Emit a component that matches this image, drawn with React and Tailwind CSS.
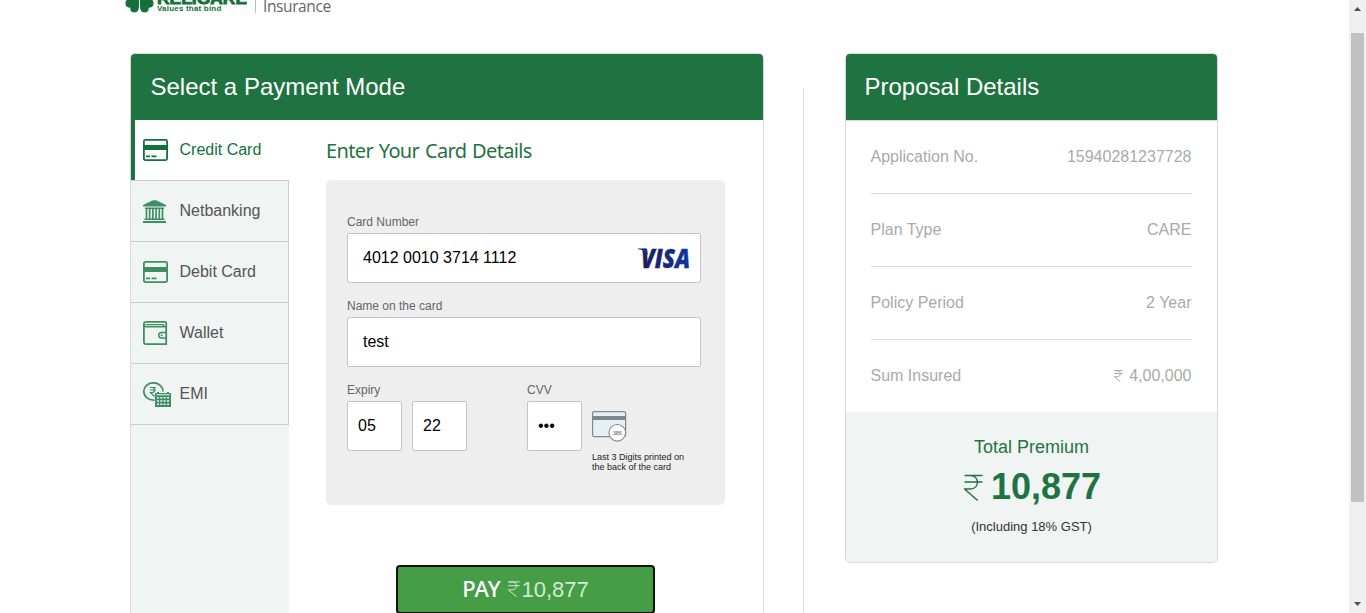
import React from "react";

function Rupee({ className, weight = 1 }) {
  return (
    <svg viewBox="0 0 18 27" className={className} fill="none" stroke="currentColor" strokeWidth={weight} preserveAspectRatio="none">
      <path vectorEffect="non-scaling-stroke" d="M0.5 1.5H17.5M0.5 8H17.5M0.5 1.5H6C15 1.5 15 15 6 15H0.5L13 26.5" />
    </svg>
  );
}

function CardIcon() {
  return (
    <svg width="25" height="22" viewBox="0 0 25 22" fill="none" stroke="currentColor">
      <rect x=".9" y=".9" width="23.2" height="20.2" rx="1.5" strokeWidth="1.8" />
      <path d="M1 8.5H24" strokeWidth="5" />
      <path d="M3 17.3H7M8.5 17.3H13.5" strokeWidth="1.8" />
    </svg>
  );
}

function BankIcon() {
  return (
    <svg width="24" height="23" viewBox="0 0 24 23" fill="currentColor">
      <path d="M0 6.5V5L10 .2H13L23 5V6.5Z" />
      <path d="M2 7.5H21V9H2ZM1.5 18.5H21.5V20H1.5ZM0 21H23V23H0Z" />
      <path fill="none" stroke="currentColor" strokeWidth="1.7" d="M3.5 9V19M6.7 9V19M9.9 9V19M13.1 9V19M16.3 9V19M19.5 9V19" />
    </svg>
  );
}

function WalletIcon() {
  return (
    <svg width="25" height="24" viewBox="0 0 25 24" fill="none" stroke="currentColor" strokeWidth="1.8">
      <path d="M23.2 5.7V1.8C23.2 1.2 22.8.9 22.2.9H3C1.6.9.9 1.6.9 3V21C.9 22.4 1.6 23.1 3 23.1H23.2V5.7H3.2C1.8 5.7.9 5 .9 3.5" />
      <path d="M2.5 3.5H20.5V5.5" strokeWidth="1.2" />
      <path d="M23 11.5H18.5C14.8 11.5 14.8 17 18.5 17H23" strokeWidth="1.5" />
      <circle cx="18.6" cy="14.3" r=".7" fill="currentColor" strokeWidth=".6" />
    </svg>
  );
}

function EmiIcon() {
  return (
    <svg width="28" height="25" viewBox="0 0 28 25" fill="none" stroke="currentColor">
      <path d="M20 9.5A9.6 8.7 0 1 0 10.5 18.2H11.5" strokeWidth="1.7" />
      <path d="M7 5.5H13M7 8H13M7 5.5H9C12.5 5.5 12.5 10.5 9 10.5H7.5L11.5 14.5" strokeWidth="1.2" />
      <path fill="currentColor" stroke="none" fillRule="evenodd" d="M12 11H14V10H16V11H24V10H26V11H28V25H12ZM13.5 12.2V13.2H26.5V12.2ZM14 15V16.5H16V15ZM17.3 15V16.5H19.3V15ZM20.6 15V16.5H22.6V15ZM24 15V16.5H26V15ZM14 18.2V19.8H16V18.2ZM17.3 18.2V19.8H19.3V18.2ZM20.6 18.2V19.8H22.6V18.2ZM24 18.2V19.8H26V18.2ZM14 21.4V23H16V21.4ZM17.3 21.4V23H19.3V21.4ZM20.6 21.4V23H22.6V21.4ZM24 21.4V23H26V21.4Z" />
    </svg>
  );
}

function Clover() {
  return (
    <svg width="29" height="30" viewBox="0 0 29 30" fill="#156f3a" className="shrink-0">
      <path d="M14.2 15.5C10 14 4 14 1.5 17C-1 21 1 25 5.5 24.8C4.5 28 7.5 30 10.5 29.3C14 28.5 14.3 25 14.2 15.5Z" />
      <path d="M14.8 15.5C19 14 25 14 27.5 17C30 21 28 25 23.5 24.8C24.5 28 21.5 30 18.5 29.3C15 28.5 14.7 25 14.8 15.5Z" />
      <path d="M14.5 15C5 11 5 1 10 1C13 1 14.5 3 14.5 5C14.5 3 16 1 19 1C24 1 24 11 14.5 15Z" />
      <path d="M14.5 16V29.5" stroke="#fff" strokeWidth=".7" />
    </svg>
  );
}

function CvvIcon() {
  return (
    <svg width="35" height="32" viewBox="0 0 35 32">
      <rect x=".6" y=".6" width="33" height="25" rx="1.5" fill="#e6eff7" stroke="#7f8a8c" strokeWidth="1.2" />
      <rect x="1" y="5" width="32.5" height="4" fill="#7f8888" />
      <circle cx="25.3" cy="21.8" r="8.3" fill="#fff" stroke="#858b8c" strokeWidth="1.1" />
      <text x="25.3" y="24" textAnchor="middle" fontSize="5.5" fill="#555" fontFamily="Liberation Sans">386</text>
    </svg>
  );
}

function Visa() {
  return (
    <svg width="51" height="21" viewBox="0 0 51 21" className="shrink-0 overflow-visible">
      <defs>
        <linearGradient id="visa" x1="0" x2="1">
          <stop offset="0" stopColor="#1b1d57" />
          <stop offset="1" stopColor="#1035a5" />
        </linearGradient>
      </defs>
      <g fill="url(#visa)">
        <text x="3" y="19.5" fontFamily="Open Sans" fontWeight="800" fontStyle="italic" fontSize="26" textLength="49" lengthAdjust="spacingAndGlyphs" stroke="url(#visa)" strokeWidth=".4">VISA</text>
        <path d="M0 .5H8.5L10 6.5L6.5 4C5 2.4 3 1.4 0 1.2Z" />
      </g>
    </svg>
  );
}

const tabs = [
  ["Netbanking", BankIcon],
  ["Debit Card", CardIcon],
  ["Wallet", WalletIcon],
  ["EMI", EmiIcon],
];

function Label({ children }) {
  return <div className="h-[23px] text-[12px] leading-[25px] text-[#666]">{children}</div>;
}

function Field({ children, className = "" }) {
  return (
    <div className={`flex h-[50px] items-center rounded-[2px] border border-[#c4c4c4] bg-white text-[16px] text-black ${className}`}>
      {children}
    </div>
  );
}

function PaymentPanel() {
  return (
    <section className="flex h-[600px] w-[634px] shrink-0 flex-col overflow-hidden rounded-t-[5px] border border-[#d9d9d9]">
      <h1 className="h-[66px] shrink-0 bg-[#1f7340] pl-[19.5px] text-[24px] leading-[66px] text-white">Select a Payment Mode</h1>
      <div className="flex flex-1">
        <nav className="flex w-[158px] shrink-0 flex-col bg-[#f0f4f3]">
          <div className="flex h-[60px] items-center border-l-4 border-[#1f7340] bg-white pl-2 text-[#11733c]">
            <CardIcon />
            <span className="-mt-px ml-[11.5px] text-[16px]">Credit Card</span>
          </div>
          <div className="border-t border-[#ccc]">
            {tabs.map(([name, Icon]) => (
              <div key={name} className="flex h-[61px] items-center border-r border-b border-[#ccc] pl-3">
                <span className="w-[36.5px] text-[#3d8f63]"><Icon /></span>
                <span className="text-[16px] text-[#555]">{name}</span>
              </div>
            ))}
          </div>
        </nav>
        <div className="flex flex-col pl-[37px]">
          <h2 className="h-[60px] font-['Noto_Sans'] text-[20px] leading-[61px] tracking-[-0.65px] [word-spacing:1.2px] text-[#1f7340]">Enter Your Card Details</h2>
          <div className="h-[325px] w-[399px] rounded-[5px] bg-[#eee] pt-[30px] pr-6 pl-[21px]">
            <Label>Card Number</Label>
            <Field className="justify-between pr-[11px] pl-[15px]">
              <span>4012 0010 3714 1112</span>
              <Visa />
            </Field>
            <div className="pt-[11px]"><Label>Name on the card</Label></div>
            <Field className="pl-[15px]">test</Field>
            <div className="flex pt-[11px]">
              <div className="w-[180px]">
                <Label>Expiry</Label>
                <div className="flex gap-[10px]">
                  <Field className="w-[55px] pl-[10px]">05</Field>
                  <Field className="w-[55px] pl-[10px]">22</Field>
                </div>
              </div>
              <div>
                <Label>CVV</Label>
                <Field className="w-[55px] pl-[10px]">•••</Field>
              </div>
              <div className="pt-[33px] pl-[10px]">
                <CvvIcon />
                <p className="pt-[9px] text-[9px] leading-[10px] whitespace-nowrap text-[#222]">Last 3 Digits printed on<br />the back of the card</p>
              </div>
            </div>
          </div>
          <button className="mt-[60px] ml-[70px] flex h-[49px] w-[259px] items-center justify-center rounded-[4px] border-2 border-[#111] bg-[#459d46] pb-px text-[22px] text-white">
            <span className="-mt-0.5 font-['Noto_Sans'] text-[22px] font-medium">PAY</span>
            <Rupee className="mr-[1px] ml-[8px] h-[16px] w-[12px] text-[#d3ead3]" />
            <span className="text-[#d3ead3]">10,877</span>
          </button>
        </div>
      </div>
    </section>
  );
}

const details = [
  ["Application No.", "15940281237728"],
  ["Plan Type", "CARE"],
  ["Policy Period", "2 Year"],
  ["Sum Insured", "4,00,000"],
];

function ProposalPanel() {
  return (
    <section className="flex h-[510px] w-[373px] shrink-0 flex-col overflow-hidden rounded-[5px] border border-[#d9d9d9]">
      <h1 className="h-[67px] shrink-0 border-b border-[#d9d9d9] bg-[#1f7340] pl-[18.5px] text-[24px] leading-[66px] text-white">Proposal Details</h1>
      <div className="h-[291px] pr-[25.5px] pl-[24.5px]">
        {details.map(([name, value], i) => (
          <div key={name} className="flex h-[73px] items-center justify-between border-b border-[#d9d9d9] text-[16px] text-[#aaa] last:border-transparent">
            <span>{name}</span>
            <span className="flex items-center">
              {i === 3 && <Rupee className="mr-[6px] h-3 w-[9px]" />}
              {value}
            </span>
          </div>
        ))}
      </div>
      <div className="flex flex-1 flex-col items-center bg-[#f0f4f3] pt-[22px] text-[#1f7340]">
        <div className="text-[18px] leading-[26px]">Total Premium</div>
        <div className="flex h-[54px] items-center pl-[2px] text-[36px] font-bold">
          <Rupee className="mr-[8px] h-[27px] w-[19px]" weight={1.4} />
          <span>10,877</span>
        </div>
        <div className="text-[13px] leading-[26px] text-[#333]">(Including 18% GST)</div>
      </div>
    </section>
  );
}

export default function App() {
  return (
    <div className="flex h-[613px] w-[1366px] overflow-hidden bg-white font-['Liberation_Sans',sans-serif]">
      <main className="min-w-0 flex-1 overflow-hidden">
        <header className="flex h-[53px] items-start overflow-hidden pl-[125px]">
          <div className="-mt-[17px] flex h-[31px]">
            <Clover />
            <div className="ml-[3px] w-[98px] text-[#156f3a]">
              <svg width="90" height="22" viewBox="0 0 90 22" className="block" fill="currentColor">
                <text x="0" y="20.5" fontFamily="Liberation Sans" fontWeight="900" fontSize="16" textLength="90" lengthAdjust="spacingAndGlyphs" stroke="currentColor" strokeWidth=".9">RELIGARE</text>
              </svg>
              <div className="text-[8px] leading-[8px] font-bold tracking-[0.2px] whitespace-nowrap">Values that bind</div>
            </div>
            <div className="h-[30px] border-l border-[#bbb] pt-[14px] pl-[7px] font-['Open_Sans'] text-[15.5px] leading-[19px] tracking-[-0.4px] text-[#666]">Insurance</div>
          </div>
        </header>
        <div className="flex items-start pl-[130px]">
          <PaymentPanel />
          <div className="mt-[35px] mr-[41px] ml-[39px] h-[560px] w-px shrink-0 bg-[#d9d9d9]" />
          <ProposalPanel />
        </div>
      </main>
      <aside className="flex w-[17px] shrink-0 flex-col items-center bg-[#f0f0f0]">
        <svg width="17" height="33" viewBox="0 0 17 33"><path d="M5 11L8.5 7L12 11Z" fill="#505050" /></svg>
        <div className="h-[469px] w-[13px] bg-[#c1c1c1]" />
        <svg width="17" height="111" viewBox="0 0 17 111"><path d="M5 100L8.5 104L12 100Z" fill="#505050" /></svg>
      </aside>
    </div>
  );
}
